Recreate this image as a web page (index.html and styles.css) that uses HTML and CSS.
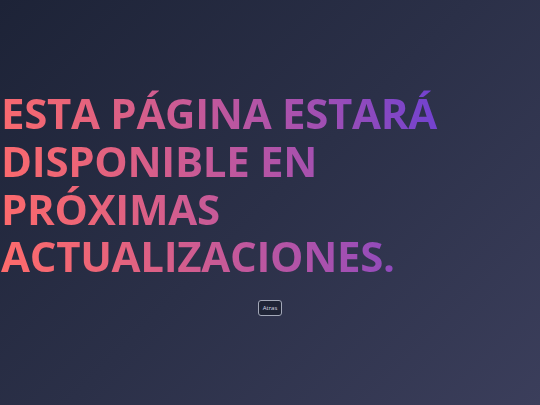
FILE: index.html
```html
<!DOCTYPE html>
<html lang="es">
<head>
<meta charset="utf-8">
<title>Próximamente</title>
<link rel="stylesheet" href="styles.css">
</head>
<body>
<main class="page">
  <h1 class="title">ESTA PÁGINA ESTARÁ DISPONIBLE EN PRÓXIMAS ACTUALIZACIONES.</h1>
  <button class="back" type="button">Atras</button>
</main>
</body>
</html>
```
FILE: styles.css
```css
html, body {
  margin: 0;
  padding: 0;
  height: 100%;
}
body {
  background: linear-gradient(135deg, #1d2337 0%, #2b3048 50%, #3b3e5b 100%);
  font-family: "Open Sans", "Noto Sans", sans-serif;
}
.page {
  height: 100%;
  display: flex;
  flex-direction: column;
  justify-content: center;
  align-items: center;
  gap: 20px;
  padding-top: 0;
  box-sizing: border-box;
}
.title {
  align-self: flex-start;
  width: 450px;
  margin: 0 0 0 1px;
  font-size: 42px;
  font-weight: 700;
  line-height: 47.7px;
  letter-spacing: -0.3px;
  background: linear-gradient(78deg, #ff6b6b 0%, #ec6577 20%, #c2589c 50%, #a14fb3 72%, #6a40d4 100%);
  -webkit-background-clip: text;
  background-clip: text;
  color: transparent;
}
.back {
  font-family: "Open Sans", sans-serif;
  font-size: 6px;
  color: #d8dbe6;
  background: #1f2436;
  border: 1px solid #a3a8b8;
  border-radius: 3px;
  padding: 0 4px;
  height: 16px;
  line-height: 14px;
}
```
